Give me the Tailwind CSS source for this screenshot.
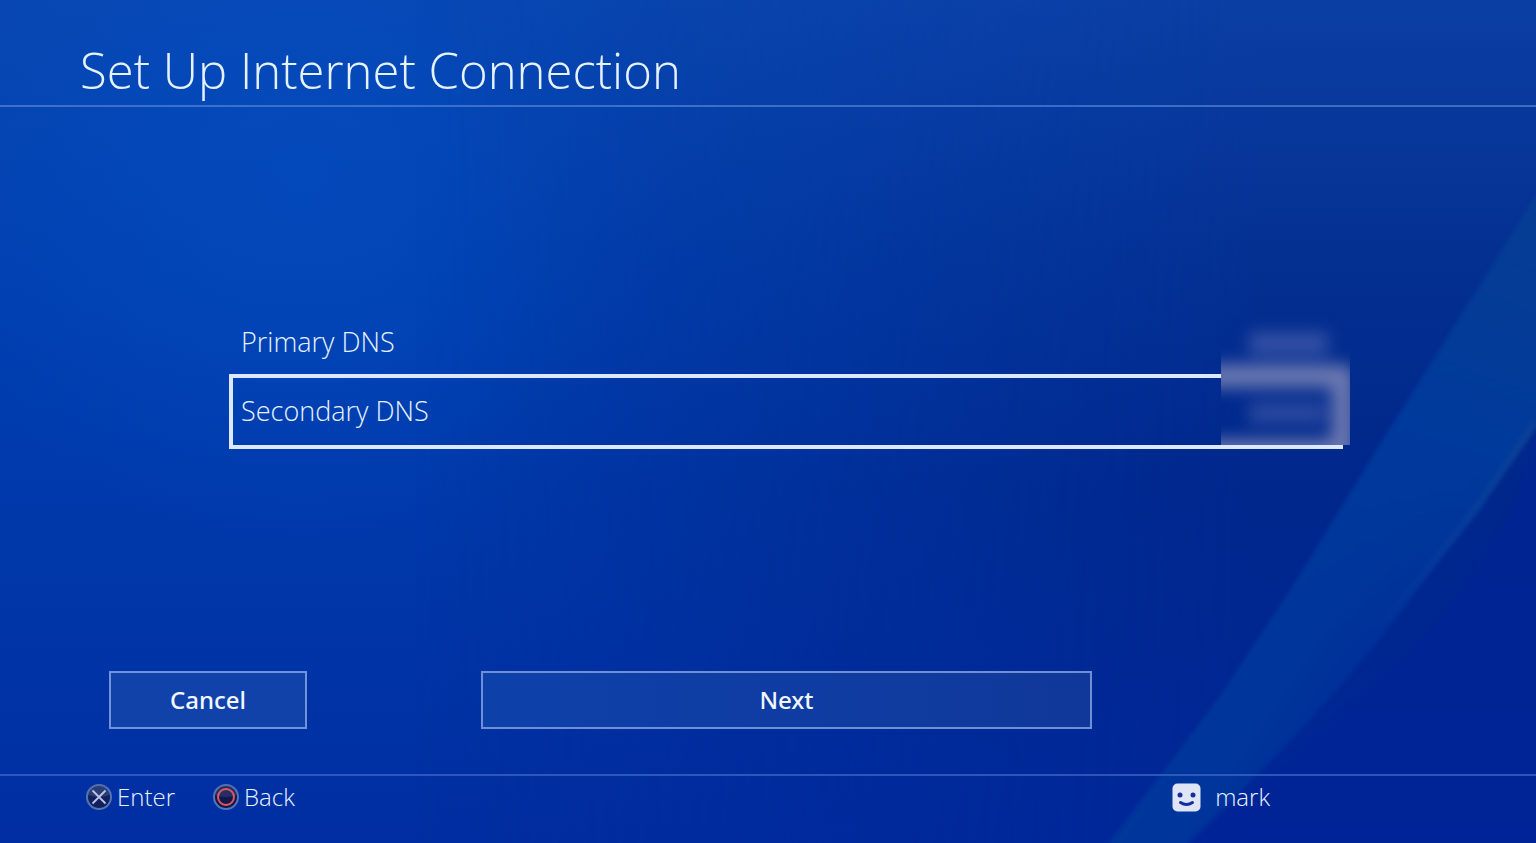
<!DOCTYPE html>
<html lang="en">
<head>
<meta charset="utf-8">
<meta name="viewport" content="width=device-width, initial-scale=1">
<title>Set Up Internet Connection</title>
<script src="https://cdn.jsdelivr.net/npm/@tailwindcss/browser@4"></script>
</head>
<body class="relative isolate flex min-h-screen flex-col overflow-x-hidden bg-[#0035a6] font-['Open_Sans','Noto_Sans',sans-serif] font-light text-[#e6f3ff]">
  <!-- Backdrop with light ribbon -->
  <svg class="absolute inset-0 -z-10 h-full w-full" viewBox="0 0 1536 843" preserveAspectRatio="none" aria-hidden="true">
    <defs>
      <linearGradient id="base" x1="0" y1="0" x2="0" y2="1">
        <stop offset="0" stop-color="#0847b2"/>
        <stop offset=".35" stop-color="#003fb0"/>
        <stop offset=".7" stop-color="#0036a8"/>
        <stop offset="1" stop-color="#002ea2"/>
      </linearGradient>
      <linearGradient id="right" x1="0" y1="0" x2="0" y2="1">
        <stop offset="0" stop-color="#0b3ea3"/>
        <stop offset=".3" stop-color="#043092"/>
        <stop offset=".58" stop-color="#00278b"/>
        <stop offset="1" stop-color="#002697"/>
      </linearGradient>
      <linearGradient id="fade" x1="0" y1="0" x2="1" y2="0">
        <stop offset=".27" stop-color="#000"/>
        <stop offset=".55" stop-color="#888"/>
        <stop offset=".82" stop-color="#fff"/>
      </linearGradient>
      <mask id="toRight"><rect width="1536" height="843" fill="url(#fade)"/></mask>
      <radialGradient id="glow" gradientUnits="userSpaceOnUse" cx="300" cy="170" r="380">
        <stop offset="0" stop-color="#044cc0" stop-opacity=".7"/>
        <stop offset="1" stop-color="#044cc0" stop-opacity="0"/>
      </radialGradient>
      <linearGradient id="ribbon" gradientUnits="userSpaceOnUse" x1="1180" y1="600" x2="1365" y2="725">
        <stop offset=".35" stop-color="#00379b"/>
        <stop offset=".6" stop-color="#00359b"/>
        <stop offset="1" stop-color="#002b98"/>
      </linearGradient>
      <linearGradient id="upper" gradientUnits="userSpaceOnUse" x1="1500" y1="200" x2="1330" y2="640">
        <stop offset="0" stop-color="#063d94"/>
        <stop offset=".5" stop-color="#003a9b"/>
        <stop offset="1" stop-color="#00379b" stop-opacity="0"/>
      </linearGradient>
      <linearGradient id="rim" gradientUnits="userSpaceOnUse" x1="1536" y1="430" x2="1370" y2="640">
        <stop offset="0" stop-color="#0b4199"/>
        <stop offset="1" stop-color="#0b4199" stop-opacity="0"/>
      </linearGradient>
      <filter id="soft" x="-5%" y="-5%" width="110%" height="110%" color-interpolation-filters="sRGB"><feGaussianBlur stdDeviation="2"/></filter>
    </defs>
    <rect width="1536" height="843" fill="url(#base)"/>
    <rect width="1536" height="843" fill="url(#glow)"/>
    <rect width="1536" height="843" fill="url(#right)" mask="url(#toRight)"/>
    <path d="M1540 420C1500 610 1340 710 1190 843H1540Z" fill="#002397" opacity=".5" filter="url(#soft)"/>
    <g filter="url(#soft)">
      <path d="M1545 180Q1490 270 1440 349L1363 472L1293 586L1220 696L1163 772L1100 855H1175Q1250 785 1313 717T1430 573L1480 510L1545 408Z" fill="url(#ribbon)"/>
      <path d="M1545 180Q1490 270 1440 349L1363 472L1293 586L1220 696H1331Q1380 640 1430 573L1480 510L1545 408Z" fill="url(#upper)"/>
      <path d="M1536 422L1478 506L1428 569L1378 628" fill="none" stroke="url(#rim)" stroke-width="7"/>
    </g>
  </svg>

  <header class="flex h-[107px] items-end border-b-2 border-[#4a7ad0]/80 pb-1 pl-20">
    <h1 class="text-[49px] leading-[62px]">Set Up Internet Connection</h1>
  </header>

  <main class="flex flex-1 flex-col">
    <section class="relative mt-[203px] mr-[193px] ml-[229px]" aria-label="DNS settings">
      <button type="button" class="flex h-16 w-full items-center pl-3 text-left text-[27px]">Primary DNS</button>
      <button type="button" class="relative flex h-[75px] w-full items-center border-b-4 border-l-4 border-[#dce8ff] pt-1 pl-2 text-left text-[27px] before:absolute before:top-0 before:right-[122px] before:left-0 before:h-1 before:bg-[#dce8ff]">Secondary DNS</button>
      <!-- Obscured values -->
      <svg class="absolute -right-[7px] bottom-1 h-[135px] w-[129px]" viewBox="0 0 129 135" aria-hidden="true">
        <defs>
          <filter id="blur" filterUnits="userSpaceOnUse" x="-60" y="-30" width="260" height="220" color-interpolation-filters="sRGB"><feGaussianBlur stdDeviation="8"/></filter>
        </defs>
        <g filter="url(#blur)">
          <rect x="28" y="22" width="79" height="23" fill="#3853a5" opacity=".9"/>
          <rect x="28" y="92" width="76" height="22" fill="#3853a5" opacity=".75"/>
          <path d="M-50 66H122V141H-50" fill="none" stroke="#6b78b0" stroke-width="23" stroke-linejoin="round"/>
        </g>
      </svg>
    </section>

    <div class="mt-auto mb-[45px] flex pr-[444px] pl-[109px] font-['Noto_Sans','Open_Sans',sans-serif] text-2xl font-medium text-[#f2f7ff]">
      <button type="button" class="h-[58px] w-[198px] border-2 border-[#6f93dc] bg-[#1042a9]">Cancel</button>
      <button type="button" class="ml-[174px] h-[58px] flex-1 border-2 border-[#6f8fd6] bg-linear-to-r from-[#0d41aa] to-[#10389a]">Next</button>
    </div>
  </main>

  <footer class="flex h-[69px] items-start border-t-2 border-[#3a62c2]/80 pt-[3px] pr-[266px] pl-[85px] text-2xl leading-[36px]">
    <button type="button" class="flex items-center gap-1">
      <svg class="h-7 w-7" viewBox="0 0 28 28" aria-hidden="true">
        <circle cx="14" cy="14" r="12" fill="#12205c" stroke="#5475b8" stroke-width="2"/>
        <path d="M3 12a11 11 0 0 1 22 0q-11 4-22 0Z" fill="#53679c" opacity=".4"/>
        <path d="M7.500 7.500l13 13M20.500 7.500l-13 13" stroke="#b9c6e6" stroke-width="1.800"/>
      </svg>
      <span class="leading-[36px]">Enter</span>
    </button>
    <button type="button" class="ml-[37px] flex items-center gap-1">
      <svg class="h-7 w-7" viewBox="0 0 28 28" aria-hidden="true">
        <circle cx="14" cy="14" r="12" fill="#12184f" stroke="#5475b8" stroke-width="2"/>
        <path d="M3 12a11 11 0 0 1 22 0q-11 4-22 0Z" fill="#53679c" opacity=".3"/>
        <circle cx="14" cy="14" r="8" fill="none" stroke="#e2575c" stroke-width="2"/>
      </svg>
      <span class="leading-[36px]">Back</span>
    </button>
    <div class="ml-auto flex items-center gap-[14px]">
      <svg class="h-[29px] w-[29px]" viewBox="0 0 29 29" aria-hidden="true">
        <rect x=".5" y=".5" width="28" height="28" rx="5" fill="#dfe5f6"/>
        <circle cx="8" cy="12" r="2.500" fill="#13309a"/>
        <circle cx="21" cy="12" r="2.500" fill="#13309a"/>
        <path d="M8.500 19.500q6 4 12 0" fill="none" stroke="#13309a" stroke-width="3" stroke-linecap="round"/>
      </svg>
      <span>mark</span>
    </div>
  </footer>
</body>
</html>
